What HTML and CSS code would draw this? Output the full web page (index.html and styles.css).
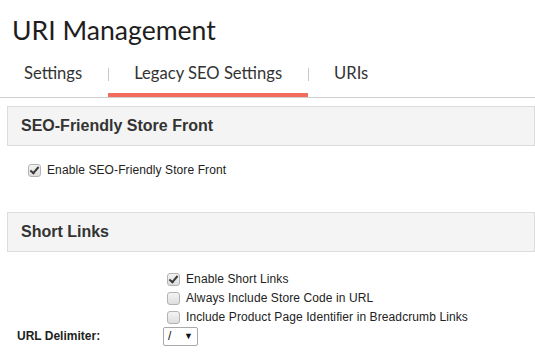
FILE: index.html
```html
<!DOCTYPE html>
<html>
<head>
<meta charset="utf-8">
<title>URI Management</title>
<link rel="stylesheet" href="styles.css">
</head>
<body>
<h1 class="title">URI Management</h1>
<nav class="tabs">
  <a class="tab first">Settings</a>
  <a class="tab active">Legacy SEO Settings</a>
  <a class="tab">URIs</a>
</nav>

<section class="section">
  <h2 class="section-head">SEO-Friendly Store Front</h2>
  <div class="section-body simple">
    <label class="check"><input type="checkbox" checked><span>Enable SEO-Friendly Store Front</span></label>
  </div>
</section>

<section class="section second">
  <h2 class="section-head">Short Links</h2>
  <div class="section-body form">
    <div class="row">
      <div class="row-label"></div>
      <div class="row-controls">
        <label class="check"><input type="checkbox" checked><span>Enable Short Links</span></label>
        <label class="check"><input type="checkbox"><span>Always Include Store Code in URL</span></label>
        <label class="check"><input type="checkbox"><span>Include Product Page Identifier in Breadcrumb Links</span></label>
      </div>
    </div>
    <div class="row delim">
      <div class="row-label strong">URL Delimiter:</div>
      <div class="row-controls">
        <span class="select"><span class="val">/</span><span class="arrow">▼</span></span>
      </div>
    </div>
  </div>
</section>
</body>
</html>
```
FILE: styles.css
```css
html, body {
  margin: 0;
  padding: 0;
  background: #fff;
}
body {
  font-family: "Liberation Sans", Arial, sans-serif;
  color: #222;
  width: 535px;
  height: 354px;
  overflow: hidden;
}
.title {
  font-family: Lato, "Open Sans", sans-serif;
  font-weight: 400;
  font-size: 26.6px;
  line-height: 32px;
  margin: 14px 0 0 12px;
  color: #1e1e1e;
}
.tabs {
  display: flex;
  margin-top: 17px;
  border-bottom: 1px solid #cfcfcf;
}
.tab {
  position: relative;
  font-family: Lato, "Open Sans", sans-serif;
  font-size: 16.6px;
  line-height: 20px;
  color: #333;
  padding: 0 26px 10px;
  border-bottom: 4px solid transparent;
}
.tab.first {
  padding-left: 24px;
}
.tab + .tab::before {
  content: "";
  position: absolute;
  left: 0;
  top: 5px;
  width: 1px;
  height: 13px;
  background: #c8c8c8;
}
.tab.active {
  border-bottom-color: #f26b5b;
}
.section {
  margin: 8px 0 0 7px;
}
.section.second {
  margin-top: 0;
}
.section-head {
  margin: 0;
  border: 1px solid #dcdcdc;
  background: #f4f4f4;
  font-size: 16px;
  font-weight: bold;
  line-height: 19px;
  padding: 9px 13px 10px;
  color: #333;
}
.section-body.simple {
  padding: 15px 0 32px 17px;
}
.check {
  display: flex;
  align-items: center;
  font-size: 12px;
  line-height: 19px;
  letter-spacing: 0.1px;
  color: #222;
}
.check input {
  appearance: none;
  -webkit-appearance: none;
  position: relative;
  width: 13px;
  height: 13px;
  margin: 0 6px 0 4px;
  border: 1px solid #b3b3b3;
  border-radius: 3px;
  background: linear-gradient(#f3f3f3, #dedede);
  box-sizing: border-box;
}
.check input:checked::after {
  content: "";
  position: absolute;
  left: 3px;
  top: 0px;
  width: 3px;
  height: 7px;
  border: solid #3a3a3a;
  border-width: 0 2px 2px 0;
  transform: rotate(40deg);
}
.section-body.form {
  padding-top: 18px;
}
.row {
  display: flex;
}
.row-label {
  width: 146px;
  padding-left: 10px;
  font-size: 12px;
}
.row-label.strong {
  font-weight: bold;
  color: #222;
}
.row.delim {
  align-items: center;
  margin-top: -1px;
}
.row.delim .row-label {
  padding-top: 1px;
}
.select {
  display: inline-flex;
  align-items: center;
  justify-content: space-between;
  box-sizing: border-box;
  width: 35px;
  height: 19px;
  border: 1px solid #a9a9a9;
  border-radius: 2px;
  padding: 0 4px 0 4px;
  font-size: 12px;
  color: #111;
  background: #fff;
}
.select .arrow {
  font-size: 9px;
}
```
